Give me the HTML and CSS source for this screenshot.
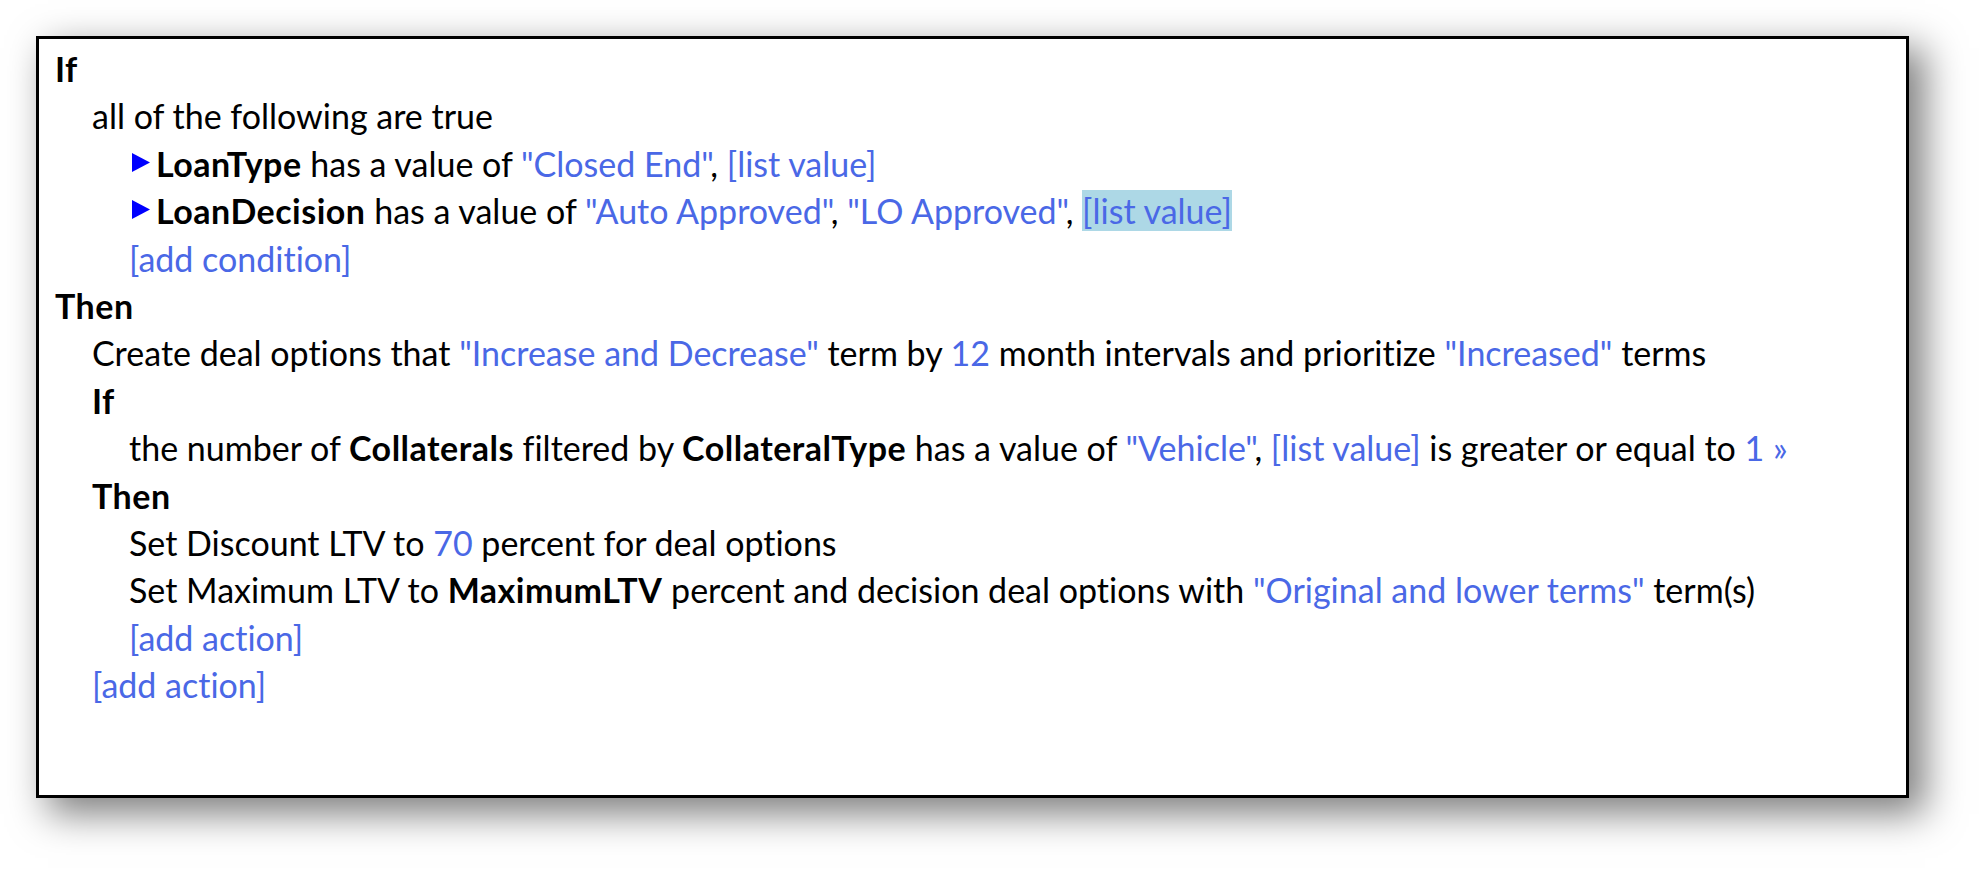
FILE: index.html
```html
<!DOCTYPE html>
<html lang="en">
<head>
<meta charset="utf-8">
<title>Rule</title>
<link rel="stylesheet" href="styles.css">
</head>
<body>
<div class="rule-box">
  <div class="line kw">If</div>
  <div class="block">
    <div class="line">all of the following are true</div>
    <div class="block">
      <div class="line cond"><svg class="tri" width="18" height="19" viewBox="0 0 18 19"><polygon points="0,0 18,9.5 0,19" fill="#0000ff"/></svg><b>LoanType</b> has a value of <span class="v">"Closed End"</span>, <span class="v">[list value]</span></div>
      <div class="line cond"><svg class="tri" width="18" height="19" viewBox="0 0 18 19"><polygon points="0,0 18,9.5 0,19" fill="#0000ff"/></svg><b>LoanDecision</b> has a value of <span class="v">"Auto Approved"</span>, <span class="v">"LO Approved"</span>, <span class="v sel">[list value]</span></div>
      <div class="line"><span class="v">[add condition]</span></div>
    </div>
  </div>
  <div class="line kw">Then</div>
  <div class="block">
    <div class="line">Create deal options that <span class="v">"Increase and Decrease"</span> term by <span class="v">12</span> month intervals and prioritize <span class="v">"Increased"</span> terms</div>
    <div class="line kw">If</div>
    <div class="block">
      <div class="line">the number of <b>Collaterals</b> filtered by <b>CollateralType</b> has a value of <span class="v">"Vehicle"</span>, <span class="v">[list value]</span> is greater or equal to <span class="v">1 »</span></div>
    </div>
    <div class="line kw">Then</div>
    <div class="block">
      <div class="line">Set Discount LTV to <span class="v">70</span> percent for deal options</div>
      <div class="line">Set Maximum LTV to <b>MaximumLTV</b> percent and decision deal options with <span class="v">"Original and lower terms"</span> term(s)</div>
      <div class="line"><span class="v">[add action]</span></div>
    </div>
    <div class="line"><span class="v">[add action]</span></div>
  </div>
</div>
</body>
</html>
```

FILE: styles.css
```css
html, body {
  margin: 0;
  padding: 0;
  background: #ffffff;
}

body {
  box-sizing: border-box;
  min-height: 872px;
  padding: 36px 0 0 36px;
  font-family: Lato, "Open Sans", sans-serif;
  font-size: 34px;
  font-variant-ligatures: none;
  color: #000000;
}

.rule-box {
  box-sizing: border-box;
  width: 1873px;
  height: 762px;
  border: 3px solid #000000;
  background: #ffffff;
  padding: 6px 16px;
  box-shadow: 14px 14px 36px 2px rgba(0, 0, 0, 0.5);
}

.line {
  line-height: 47.4px;
  white-space: nowrap;
}

.kw {
  font-weight: 700;
  letter-spacing: 0.5px;
}

b {
  font-weight: 700;
  letter-spacing: 0.5px;
}

.block {
  padding-left: 37px;
}

.v {
  color: #4a68e6;
}

.sel {
  background: #add8e6;
}

.tri {
  vertical-align: 5px;
  margin-right: 6px;
  margin-left: 3px;
}
```
